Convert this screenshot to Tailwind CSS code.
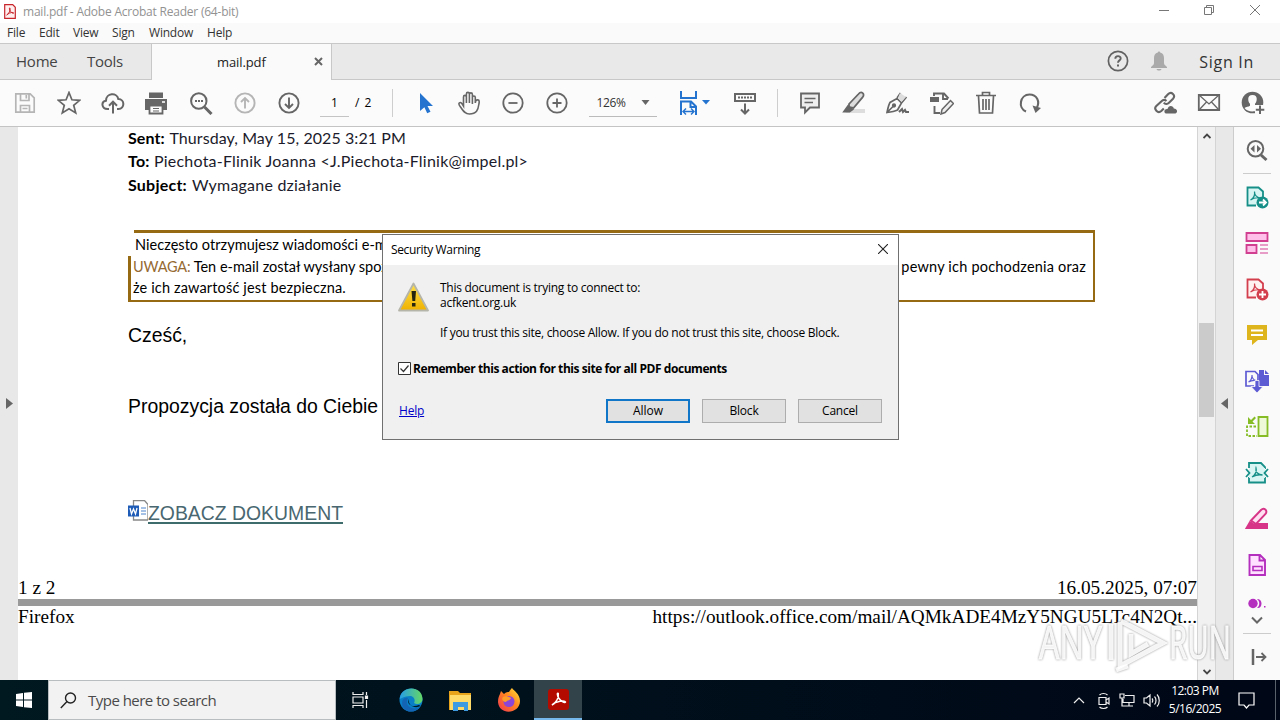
<!DOCTYPE html>
<html lang="en">
  <head>
    <meta charset="UTF-8" />
    <meta name="viewport" content="width=device-width, initial-scale=1.0" />
    <title>mail.pdf - Adobe Acrobat Reader (64-bit)</title>
    <script src="https://cdn.jsdelivr.net/npm/@tailwindcss/browser@4"></script>
  </head>

  <body
    class="relative flex h-screen w-screen flex-col overflow-hidden whitespace-nowrap bg-white font-['Open_Sans',sans-serif] text-black"
  >
    <!-- Title bar -->
    <header class="flex h-[23px] shrink-0 items-center bg-white">
      <svg class="mb-px ml-1 h-[15px] w-[12px]" viewBox="0 0 12 15" fill="none">
        <path d="M.7 .7h8l2.6 2.6v11H.7z" fill="#fff0ef" stroke="#c7252b" stroke-width="1.2" />
        <path d="M2.7 11C5 10 6.500 6 6 4.200 5.300 3 5 5 6.500 7.300 7.500 9 9.500 9.800 9.700 9 9.500 7.900 5 8.500 2.700 11z" stroke="#c7252b" />
      </svg>
      <span class="ml-[7px] text-[12px] tracking-[-0.22px] text-[#929292]">mail.pdf - Adobe Acrobat Reader (64-bit)</span>
      <svg class="ml-auto h-[23px] w-[124px]" viewBox="0 0 124 23" fill="none" stroke="#777">
        <path d="M3 10.500h10M48.500 7.500h7v7h-7zM50.500 7.500v-2h7v7h-2M94 5l10 10m0-10l-10 10" />
      </svg>
    </header>

    <!-- Menu bar -->
    <nav class="flex h-[20px] shrink-0 items-center bg-[#fafafa] pl-[7px] text-[12px] tracking-[-0.2px] text-[#333]">
      <span class="w-8">File</span>
      <span class="w-[34px]">Edit</span>
      <span class="w-[39px]">View</span>
      <span class="w-[37px]">Sign</span>
      <span class="w-[58px]">Window</span>
      <span>Help</span>
    </nav>

    <!-- Tabs -->
    <div class="flex h-[37px] shrink-0 border-y border-[#c8c8c8] bg-[#e9e9e9] text-[#444]">
      <div class="flex w-[152px] items-center border-r border-[#c8c8c8] pl-[16px] text-[15px]">
        <span class="w-[71px] tracking-[-0.2px]">Home</span>
        <span class="tracking-[-0.3px]">Tools</span>
      </div>
      <div class="-mb-px flex w-[180px] items-center border-r border-[#c8c8c8] bg-[#fafafa] text-[#222]">
        <span class="ml-[65px] w-[97px] pt-px text-[13px] tracking-[-0.1px]">mail.pdf</span>
        <svg class="mb-px h-[9px] w-[9px]" viewBox="0 0 9 9" stroke="#666" stroke-width="2"><path d="M1 1l7 7m0-7l-7 7" /></svg>
      </div>
      <div class="ml-auto flex items-center pr-[26px]">
        <svg class="mb-px h-[22px] w-[22px]" viewBox="0 0 22 22" fill="none" stroke="#626262">
          <circle cx="11" cy="11" r="9.600" stroke-width="1.700" />
          <path d="M8.300 8.800c0-3.500 5.400-3.500 5.400-.3 0 1.900-2.700 1.900-2.700 4.200" stroke-width="1.900" />
          <path d="M11 14.500v2" stroke-width="2" />
        </svg>
        <svg class="mb-px ml-5 h-[20px] w-[20px]" viewBox="0 0 20 20" fill="#aaa">
          <path d="M8.800 1.500c0-1.500 2.400-1.500 2.400 0C14 2.200 15 4.500 15 7v5c0 1.500 1 2.200 3 4v1H2v-1c2-1.800 3-2.500 3-4V7c0-2.500 1-4.800 3.800-5.500zM7.500 18h5c-.5 2-4.500 2-5 0z" />
        </svg>
        <span class="ml-[30px] text-[16px] tracking-[0.7px] text-[#333]">Sign In</span>
      </div>
    </div>

    <!-- Toolbar -->
    <div class="flex h-[47px] shrink-0 items-center border-b border-[#c4c4c4] bg-[#fbfbfb] pl-[13px]">
      <div class="flex items-center gap-5">
        <svg class="h-6 w-6" viewBox="0 0 24 24" fill="none" stroke="#b5b5b5" stroke-width="1.700">
          <path d="M2.800 2.800h14.400l4 4v14.400H2.800zM7.500 3v6.500h8.500V3M7.500 21v-6.500h9V21M13.300 4v3.500M9.500 17.500h5" />
        </svg>
        <svg class="h-6 w-6" viewBox="0 0 24 24" fill="none" stroke="#666" stroke-width="1.700">
          <path d="M12 1.500l2.900 7.300 7.800.5-6 5 2 7.600-6.700-4.200-6.700 4.200 2-7.600-6-5 7.800-.5z" />
        </svg>
        <svg class="h-6 w-6" viewBox="0 0 24 24" fill="none" stroke="#666" stroke-width="2">
          <path d="M8 18H6.500C.5 18-.3 10.500 5 9.700 5 2 16 1 17.300 8 24 8 24 18 17.500 18H16M12 22.500V11M8 14.700l4-4 4 4" />
        </svg>
        <svg class="-ml-px mr-px h-6 w-6" viewBox="0 0 24 24" fill="#666">
          <path d="M5 1.500h14V7H5zM1 8h22v11h-4v-4H5v4H1z" />
          <path d="M5.500 14.500h13v8h-13z" fill="#fbfbfb" stroke="#666" stroke-width="1.800" />
          <path d="M9 17.500h6M9 20h6" stroke="#666" /><path d="M18 10h3v2h-3z" fill="#ddd" />
        </svg>
        <svg class="h-6 w-6" viewBox="0 0 24 24" fill="none" stroke="#666" stroke-width="2">
          <circle cx="9.800" cy="10" r="7.700" /><path d="M15.500 16l7 7" stroke-width="3" /><path d="M6 10h2m1 0h2m1 0h2" />
        </svg>
        <svg class="h-6 w-6" viewBox="0 0 24 24" fill="none" stroke="#b5b5b5" stroke-width="1.900">
          <circle cx="12" cy="12" r="9.600" /><path d="M12 17.500V7M8 11l4-4 4 4" />
        </svg>
        <svg class="h-6 w-6" viewBox="0 0 24 24" fill="none" stroke="#666" stroke-width="1.900">
          <circle cx="12" cy="12" r="9.600" /><path d="M12 6.500V17M8 13l4 4 4-4" />
        </svg>
      </div>
      <div class="ml-[19px] flex h-[27px] w-[29px] items-center justify-center border-b border-[#c4c4c4] text-[12px]">1</div>
      <span class="ml-[6px] text-[12px] tracking-[1px]">/ 2</span>
      <div class="ml-5 h-7 w-px bg-[#cecece]"></div>
      <div class="ml-5 flex items-center gap-5">
        <svg class="h-6 w-6" viewBox="-1 0 24 24" fill="#2474cf"><path d="M6 2l13 13h-5.500l3 5.800-3.300 1.500-2.800-6L6 20z" /></svg>
        <svg class="h-6 w-6" viewBox="0 0 24 24" fill="none" stroke="#666" stroke-width="1.600">
          <path d="M6.500 15V6c0-2.200 2.900-2.200 2.900 0v6-9c0-2.200 3-2.200 3 0v9-8.500c0-2.200 3-2.200 3 0V13 6.500c0-2 2.900-2 2.900 0V12c.2-1.800 1-3.500 2.700-3.100 1.900.4 1.200 2.300.9 4.100-.8 6-2.300 10-9.500 10-4.500 0-6-3-8.500-6.500-1.500-2-3-3.500-1.500-4.700 1.500-1 2.700.8 4.100 3.200z" />
        </svg>
        <svg class="h-6 w-6" viewBox="0 0 24 24" fill="none" stroke="#666" stroke-width="1.800"><circle cx="12" cy="12" r="9.700" /><path d="M7.500 12h9" /></svg>
        <svg class="h-6 w-6" viewBox="0 0 24 24" fill="none" stroke="#666" stroke-width="1.800"><circle cx="12" cy="12" r="9.700" /><path d="M7.500 12h9M12 7.500v9" /></svg>
      </div>
      <div class="ml-5 flex h-[27px] w-[68px] items-center justify-between border-b border-[#bbb] pl-[7px] pr-[7px] text-[12px] text-[#333]">
        <span class="tracking-[-0.3px]">126%</span>
        <svg class="h-[5px] w-[9px]" viewBox="0 0 9 5" fill="#666"><path d="M.5 0h8l-4 5z" /></svg>
      </div>
      <svg class="ml-[21px] h-6 w-8" viewBox="0 0 32 24" fill="none" stroke="#2474cf" stroke-width="2">
        <path d="M3 0v7h15V0M3 24V10.500h10l5 5V24M12.500 11v5H18" /><path d="M5 20.500h11M8 17.500l-3 3 3 3m5-6l3 3-3 3" stroke-width="1.400" /><path d="M24 9h8l-4 4.500z" fill="#2474cf" stroke="none" />
      </svg>
      <svg class="ml-[23px] h-6 w-6" viewBox="0 0 24 24" fill="none" stroke="#666" stroke-width="2">
        <path d="M2 3h20v7H2zM12 12.500v10M8 18.500l4 4 4-4" /><path d="M5 6.500h14" stroke-dasharray="2 1" />
      </svg>
      <div class="ml-5 h-7 w-px bg-[#cecece]"></div>
      <div class="ml-5 flex items-center gap-5">
        <svg class="h-6 w-6" viewBox="0 0 24 24" fill="#eee" stroke="#666" stroke-width="1.800">
          <path d="M3 2.500h18v14h-9l-5 5v-5H3z" /><path d="M6.500 7.500h11M6.500 11.500h8.500" stroke-width="1.300" />
        </svg>
        <svg class="h-6 w-6" viewBox="0 0 24 24" fill="none" stroke="#666" stroke-width="1.800">
          <path d="M9 18h14v4H3z" fill="#ddd" stroke="none" /><path d="M7 13L16.500 3c3-3.500 7 0 4 3.300L11.500 17l-4.500-.8z" fill="#ddd" /><path d="M6 15l4.500 3.500-3 2H2z" fill="#666" />
        </svg>
        <svg class="h-6 w-6" viewBox="0 0 24 24" fill="none" stroke="#666" stroke-width="1.700">
          <path d="M1 21.500c1-4.500 1.500-7.500 3-10l7-4 4.500 4.500-4 7c-3 1.500-6 2-10.500 2.500zM1 21.500l6-6M11 7l3.500-5m6 4L15.500 12" /><path d="M14 2l6 4-4.500 5L12 7z" fill="#ddd" stroke="none" /><circle cx="8" cy="14.500" r="1.300" fill="#666" /><path d="M13 21l3-3 1 3 2-2 1 2h3" stroke-width="2" />
        </svg>
        <svg class="h-6 w-6" viewBox="0 0 24 24" fill="none" stroke="#666" stroke-width="1.900">
          <path d="M4 5V2.500h10l4.500 5M13 3v5h5M4.500 15v7h5.500" /><path d="M0 6h9v5H0z" fill="#666" stroke="none" /><path d="M12 18.500l8.500-9 3 3-8.500 9-4 1.500z" fill="#eee" stroke-width="1.500" />
        </svg>
        <svg class="h-6 w-6" viewBox="0 0 24 24" fill="none" stroke="#666" stroke-width="1.700">
          <path d="M2 4.500h20M8.500 4V1.500h7V4M4.500 5l1 17h13l1-17M9 8v11m3-11v11m3-11v11" />
        </svg>
        <svg class="h-6 w-6" viewBox="0 0 24 24" fill="none" stroke="#666" stroke-width="2.100">
          <path d="M8 20.500C-.5 17 2 3.500 11.500 3.500c7.500 0 10.500 7 7.500 13" /><path d="M14.500 14.500L23 17l-5.500 5z" fill="#666" stroke="none" />
        </svg>
      </div>
      <div class="ml-auto flex items-center gap-5 pr-[15px]">
        <svg class="h-6 w-6" viewBox="0 0 24 24" fill="none" stroke="#666" stroke-width="2.100">
          <path d="M11.500 7L15 3.300c3.500-3.500 8 1 5 4.500l-4 4c-1.800 1.800-4 1.300-5.200-.2" /><path d="M13.500 10c-1.500-1.300-3.500-1.300-5 .2L3.300 15c-3 3 1.500 8 5 5l2.500-2.500" />
          <path d="M13 22.500c-3-1-1.500-5 1.500-4.500 1-4.500 6-3.500 6.300-.5 3.700 0 4.200 4 1.700 5z" fill="#666" stroke="none" />
        </svg>
        <svg class="h-6 w-6" viewBox="0 0 24 24" fill="none" stroke="#666"><path d="M1.800 4h20.400v15H1.800z" stroke-width="1.800" /><path d="M2 4l10 9L22 4M2 19l7.500-8M22 19l-7.500-8" stroke-width="1.300" /></svg>
        <svg class="h-6 w-6" viewBox="0 0 24 24" fill="#666">
          <circle cx="11.500" cy="11.500" r="10.800" /><path d="M11.500 4c6 0 4.500 7 2.500 8.800v2c2 1.200 4 1.200 5.500 2.200-2 4-13 5-16 0 1.500-1 4-1.200 5.500-2.200v-2C7 11 5.500 4 11.500 4z" fill="#fbfbfb" />
          <path d="M14 14h10v10H14z" fill="#fbfbfb" /><path d="M19 14.500V23m-4.200-4.200h8.500" stroke="#666" stroke-width="2" />
        </svg>
      </div>
    </div>

    <!-- Document area -->
    <div class="flex h-[553px] shrink-0">
      <div class="flex w-[18px] items-center justify-center bg-[#e8e8e8]">
        <svg class="h-[11px] w-[7px]" viewBox="0 0 7 11" fill="#666"><path d="M0 0l7 5.500L0 11z" /></svg>
      </div>

      <main class="w-[1179px] overflow-hidden bg-white">
        <div class="h-[449px] pl-[110px]">
          <div class="-mt-px font-[Lato,sans-serif] text-[16px] leading-[23.4px] tracking-[0.22px] text-[#1b1b2b]">
            <p class="tracking-[0.08px]"><b class="mr-px text-black">Sent:</b> Thursday, May 15, 2025 3:21 PM</p>
            <p><b class="text-black">To:</b> Piechota-Flinik Joanna &lt;J.Piechota-Flinik@impel.pl&gt;</p>
            <p><b class="mr-px text-black">Subject:</b> Wymagane działanie</p>
          </div>
          <div class="mt-[34px] h-[72px] w-[967px] border-b-2 border-r-2 border-[#966a12] font-[Lato,sans-serif] text-[14.5px] leading-[21.500px]">
            <div class="ml-[6px] h-[3px] bg-[#966a12]"></div>
            <div class="pl-[7px] pt-px tracking-[0.04px]">Nieczęsto otrzymujesz wiadomości e-mail</div>
            <div class="flex h-[46px] border-l-[3px] border-[#966a12] pl-[2px]">
              <div>
                <p><span class="tracking-[-0.2px] text-[#966a32]">UWAGA:</span> Ten e-mail został wysłany spoza organizacji</p>
                <p class="tracking-[0.15px]">że ich zawartość jest bezpieczna.</p>
              </div>
              <p class="ml-auto mr-[7px] tracking-[0.2px]">pewny ich pochodzenia oraz</p>
            </div>
          </div>
          <div class="font-['Liberation_Sans',sans-serif] text-[19.4px] leading-[22px]">
            <p class="mt-[22px]">Cześć,</p>
            <p class="mt-[49px]">Propozycja została do Ciebie wysłana</p>
            <p class="mt-[83px] flex text-[#496770]">
              <svg class="h-[21px] w-5" viewBox="0 0 20 21" fill="none">
                <path d="M5.500 .5h11l3.500 4v15.500H5.500z" fill="#fff" stroke="#888" stroke-width="1.300" /><path d="M13 8h5m-5 3h5m-5 3h5" stroke="#4d82cc" />
                <path d="M0 5.500h11v11H0z" fill="#1e5cb8" /><path d="M2 8l1.500 6 2-5 2 5L9 8" stroke="#fff" stroke-width="1.300" />
              </svg>
              <a class="mt-[3px] h-[21px] border-b-2 border-[#3e6c6c] leading-[20px]">ZOBACZ DOKUMENT</a>
            </p>
          </div>
        </div>
        <div class="font-['Liberation_Serif',serif] text-[19.250px]">
          <div class="flex h-[24px] justify-between leading-[26px]"><span>1 z 2</span><span>16.05.2025, 07:07</span></div>
          <div class="h-[7px] bg-[#999]"></div>
          <div class="flex justify-between leading-[22px]"><span>Firefox</span><span>https://outlook.office.com/mail/AQMkADE4MzY5NGU5LTc4N2Qt...</span></div>
        </div>
      </main>

      <!-- Scrollbar -->
      <div class="flex w-[19px] flex-col items-center border-x border-[#d4d4d4] bg-[#f1f1f1]">
        <svg class="mt-[6px] h-[6px] w-2 shrink-0" viewBox="0 0 8 6" fill="none" stroke="#444" stroke-width="1.800"><path d="M.5 5L4 1.500 7.500 5" /></svg>
        <div class="mt-[184px] h-[94px] w-[15px] bg-[#cbcbcb]"></div>
        <svg class="mb-[5px] mt-auto h-[6px] w-2 shrink-0" viewBox="0 0 8 6" fill="none" stroke="#444" stroke-width="1.800"><path d="M.5 1L4 4.500 7.500 1" /></svg>
      </div>
      <div class="flex w-[18px] items-center justify-center border-r border-[#ccc] bg-[#e8e8e8]">
        <svg class="h-[11px] w-[7px]" viewBox="0 0 7 11" fill="#666"><path d="M7 0L0 5.500 7 11z" /></svg>
      </div>

      <!-- Tools pane -->
      <aside class="flex w-[46px] flex-col items-center bg-[#fafafa]">
        <svg class="mt-3 h-6 w-6 shrink-0" viewBox="0 0 24 24" fill="none" stroke="#666" stroke-width="2"><circle cx="10.500" cy="9.800" r="7.800" /><path d="M16 16l5.500 5" stroke-width="3" /><path d="M9.500 6v7.500L5.500 9.800zm2.500 0v7.500l4-3.700z" fill="#666" stroke="none" /></svg>
        <div class="mt-[10px] h-px w-7 shrink-0 bg-[#ccc]"></div>
        <div class="mt-[11px] flex flex-col gap-[22px]">
          <svg class="h-6 w-6" viewBox="0 0 24 24" fill="none" stroke="#168f88" stroke-width="1.800">
            <path d="M11 20.500H2.500v-18h11l4.500 4v6" fill="#d8f4f3" /><path d="M5.500 15c3-1.500 4.500-5 4-8.500 0 4 2 6 6 6.500-4-.7-7 0-10 2z" stroke-width="1.200" /><circle cx="17.500" cy="17.500" r="6" fill="#168f88" stroke="none" /><path d="M14 17.500h6.500m-2.500-3l3 3-3 3" stroke="#fff" />
          </svg>
          <svg class="h-6 w-6" viewBox="0 0 24 24" fill="#ffbfe8" stroke="#d13f91" stroke-width="1.800">
            <path d="M1.500 2h21v8h-21zM1.500 14h10v8h-10z" /><path d="M15 14h8m-8 4h8m-8 4h8" stroke-width="1.200" />
          </svg>
          <svg class="h-6 w-6" viewBox="0 0 24 24" fill="none" stroke="#d43f4e" stroke-width="1.800">
            <path d="M11 20.500H2.500v-18h11l4.500 4v6" fill="#fff1f0" /><path d="M5.500 15c3-1.500 4.500-5 4-8.500 0 4 2 6 6 6.500-4-.7-7 0-10 2z" stroke-width="1.200" /><circle cx="17.500" cy="17.500" r="6" fill="#d43f4e" stroke="none" /><path d="M14 17.500h7M17.500 14v7" stroke="#fff" />
          </svg>
          <svg class="h-6 w-6" viewBox="0 0 24 24" fill="#dfb51d"><path d="M2 2h20v15h-9l-6 5v-5H2z" /><path d="M6 7.500h12M6 12h12" stroke="#fff" stroke-width="1.800" /></svg>
          <svg class="h-6 w-6" viewBox="0 0 24 24" fill="none" stroke="#5d5bd3" stroke-width="1.700">
            <path d="M9 17H1V2.500h9l3 3V15" /><path d="M3.500 13c2-1 3.500-3.500 3.500-7 0 3 1.500 5 4 5.500-3-.5-5 0-7.500 1.500z" stroke-width="1.100" /><path d="M14 1h5v5h5v11H14z" fill="#5d5bd3" stroke="none" /><path d="M20 1l4 4h-4z" fill="#5d5bd3" stroke="none" /><path d="M6 17.500h4v-6h4v6h4L12 24z" fill="#5d5bd3" stroke="#fafafa" stroke-width=".8" />
          </svg>
          <svg class="h-6 w-6" viewBox="0 0 24 24" fill="none" stroke="#86bd27" stroke-width="1.800">
            <path d="M13.500 2h9v19h-9z" fill="#edf9d8" /><path d="M11 11.500H2V21h10" stroke-dasharray="2.500 1.500" /><path d="M3 2v7h7L7.500 6.500 11 3 9.500 1.500 6 5z" fill="#86bd27" stroke="none" />
          </svg>
          <svg class="h-6 w-6" viewBox="0 0 24 24" fill="none" stroke="#168f88" stroke-width="1.800">
            <path d="M4 7V2h12l4 4v2M4 16v5.500h16V16" fill="#d8f4f3" /><path d="M4 7h16v10H4z" fill="#d8f4f3" stroke="none" /><path d="M1 8l3.500 4L1 16M23 8l-3.500 4 3.500 4" /><path d="M7 16c3.500-2 5-6 4-9-1 4 2.500 7 6.500 7-4-.7-7 0-10.500 2z" stroke-width="1.300" />
          </svg>
          <svg class="h-6 w-6" viewBox="0 0 24 24" fill="none" stroke="#d73688" stroke-width="1.900">
            <path d="M10 16h13v6H7z" fill="#d73688" stroke="none" /><path d="M6 13.500L16 3c3-3 7 .5 4.500 4L11 17z" fill="#ffe0f2" /><path d="M5 15l5 3.500-2.500 2.500H1.500z" fill="#d73688" />
          </svg>
          <svg class="h-6 w-6" viewBox="0 0 24 24" fill="#ffe0ff" stroke="#b52fbe" stroke-width="1.900"><path d="M4.500 2H15l5 5v15h-15.500zM14.500 2v5.500H20" /><path d="M8 13.500h9v4H8z" stroke-width="1.600" /></svg>
        </div>
        <svg class="mt-[21px] h-[11px] w-6 shrink-0" viewBox="0 0 24 11" fill="#b52fbe"><circle cx="8" cy="5.500" r="4.700" /><path d="M12 1c6-1 6 10 0 9 3-2 3-7 0-9zM19 8h1.500v1.500H19z" /></svg>
        <svg class="mt-[7px] h-[8px] w-3 shrink-0" viewBox="0 0 12 8" fill="none" stroke="#666" stroke-width="2"><path d="M1 1.500l5 5 5-5" /></svg>
        <div class="mt-[9px] h-px w-7 shrink-0 bg-[#ccc]"></div>
        <svg class="ml-1 mt-[15px] h-[16px] w-[16px] shrink-0" viewBox="0 0 16 16" fill="none" stroke="#666" stroke-width="1.800"><path d="M2 0v16" stroke-width="2.500" /><path d="M5 8h9m-3.500-4l4 4-4 4" /></svg>
      </aside>
    </div>

    <!-- Taskbar -->
    <footer class="flex h-10 shrink-0 items-center bg-[#020b1a] bg-linear-to-r from-[#001820] to-[#000716] text-white">
      <div class="flex w-12 justify-center">
        <svg class="h-4 w-4" viewBox="0 0 16 16" fill="#fff"><path d="M0 2l7-1v6.500H0zM8 .8L16 0v7.500H8zM0 8.500h7V15l-7-1zM8 8.500h8V16l-8-.8z" /></svg>
      </div>
      <div class="flex h-10 w-72 items-center border border-[#b8bdbf] bg-[#f2f2f2] pl-[11px] text-[#4a4a4a]">
        <svg class="h-[17px] w-[17px]" viewBox="0 0 17 17" fill="none" stroke="#222" stroke-width="1.400"><circle cx="10.500" cy="6" r="5" /><path d="M7 9.500L.8 16" /></svg>
        <span class="ml-[11px] text-[15px] tracking-[-0.52px]">Type here to search</span>
      </div>
      <div class="flex w-12 justify-center">
        <svg class="h-[16px] w-[17px]" viewBox="0 0 17 16" fill="none" stroke="#eee" stroke-width="1.200"><path d="M1 0v2.500h10V0M1 5h10v6H1zM1 16v-2.500h10V16M14.500 0v3m0 5v8" /><path d="M13.500 4h2v2.500h-2z" fill="#fff" /></svg>
      </div>
      <div class="ml-[3px] flex gap-px">
        <div class="flex h-10 w-12 items-center justify-center">
          <svg class="h-6 w-6" viewBox="0 0 24 24">
            <defs><linearGradient id="edge" x1="0" x2="1"><stop stop-color="#279de5" /><stop offset="1" stop-color="#65d765" /></linearGradient></defs>
            <circle cx="12" cy="12" r="11.500" fill="#087fc7" /><path d="M.8 11C1-2 23-4 23.500 11c0 5-6 6-8.500 4 2-4-1-7-4-7-6 0-9 3-10.200 3z" fill="url(#edge)" /><path d="M9 10c-4 7 3 13 12 9-5 7-18 6-18-4C3 11 6 9 9 10z" fill="#1365b4" /><path d="M10 11c-3 5 3 9 10 6l1.500 1c-5 3-13 0-11.500-7z" fill="#001820" />
          </svg>
        </div>
        <div class="flex h-10 w-12 items-center justify-center">
          <svg class="h-[21px] w-[22px]" viewBox="0 0 22 21"><path d="M0 1h9l2 2h11v17H0z" fill="#e8a51c" /><path d="M1 5h21v15H1z" fill="#ffdc69" /><path d="M4 12h15v9h-4v-4H9v4H4z" fill="#3c9be1" /></svg>
        </div>
        <div class="flex h-10 w-12 items-center justify-center">
          <svg class="h-6 w-6" viewBox="0 0 24 24">
            <defs><linearGradient id="fox" x1="0" y1="1" x2="1" y2="0"><stop stop-color="#f13253" /><stop offset=".55" stop-color="#ff8620" /><stop offset="1" stop-color="#ffe83b" /></linearGradient></defs>
            <path d="M3 6l1-3 3 3c2-2 4-2 5-2 1-2 2-3 3-4 2 3 8 6 8 13 0 13-21 15-22 1C1 10 2 8 3 6z" fill="url(#fox)" /><circle cx="12" cy="13.500" r="5.500" fill="#8b45d9" /><path d="M6 9c3-2 6 0 8 1-1 3-4 2-5 4-3 0-5-3-3-5z" fill="#ff9d29" />
          </svg>
        </div>
        <div class="flex h-10 w-12 items-center justify-center border-b-2 border-[#76b9ed] bg-[#33434a]">
          <svg class="h-[21px] w-[21px]" viewBox="0 0 21 21" fill="none"><rect width="21" height="21" rx="3" fill="#b30b00" /><path d="M4 16c4-2 7-7 6.300-11.500-1.300-1.500-1.500 2 .7 5 2 3 6 5 6.500 3.500C17 11 8 12 4 16z" stroke="#fff" stroke-width="1.500" /></svg>
        </div>
      </div>
      <div class="ml-auto flex h-10 items-center">
        <svg class="h-[20px] w-[92px]" viewBox="0 0 92 20" fill="none" stroke="#eee" stroke-width="1.200">
          <path d="M2 13l5-5 5 5" /><path d="M27 7.500h7v7h-7zM34 10l3-2v6l-3-2M27.500 5c2-2 6-2 8 0m-8 12c2 2 6 2 8 0" />
          <path d="M53 5.500h9v7h-11V9m6 4v3m-5 0h9M48 4h4v4h-4zM50 8v8h3" /><path d="M72 8h2.500L78 5v11l-3.500-3H72zM80 8.500c1 1 1 3 0 4m2.500-6c2 2 2 6 0 8m2.500-10c3 3 3 9 0 12" />
        </svg>
        <div class="ml-px w-[60px] text-center text-[12px] leading-[18px] tracking-[-0.5px]"><p>12:03 PM</p><p>5/16/2025</p></div>
        <svg class="ml-[13px] mr-5 h-[17px] w-[17px]" viewBox="0 0 17 17" fill="none" stroke="#fff" stroke-width="1.200"><path d="M1 1h15v12h-5l-2.500 3L6 13H1z" /></svg>
        <div class="mr-1 h-10 w-px bg-[#59616b]"></div>
      </div>
    </footer>

    <!-- Recording watermark -->
    <svg class="absolute left-[1036px] top-[608px] h-[72px] w-[204px] drop-shadow-[0_0_1px_#888]" viewBox="0 0 204 72" fill="none" stroke="#fff" stroke-opacity=".9">
      <g fill="#fff" fill-opacity=".9" stroke-width="1" font-family="Open Sans" font-size="46" font-weight="400">
        <text x="3" y="51" textLength="63" lengthAdjust="spacingAndGlyphs">ANY</text>
        <text x="133" y="51" textLength="62" lengthAdjust="spacingAndGlyphs">RUN</text>
      </g>
      <path d="M75 16v36M84 14v44l43-23-42-22M95 26v20l17-10" stroke-width="5" /><path d="M80 62l12-4" stroke-width="5" />
    </svg>

    <!-- Security dialog -->
    <div class="absolute left-[382px] top-[234px] flex h-[206px] w-[517px] flex-col border border-[#707070] bg-[#f0f0f0] text-[12px]" role="dialog">
      <div class="flex h-[30px] items-center justify-between bg-white pl-2 pr-[10px]">
        <span class="tracking-[-0.35px]">Security Warning</span>
        <svg class="mb-[2px] h-[10px] w-[10px]" viewBox="0 0 10 10" stroke="#222" stroke-width="1.100"><path d="M0 0l10 10m0-10L0 10" /></svg>
      </div>
      <div class="flex pl-[15px] pt-[15px]">
        <svg class="mt-[2px] h-[30px] w-[31px]" viewBox="0 0 31 30">
          <defs><linearGradient id="warn" x2="0" y2="1"><stop stop-color="#ffe14a" /><stop offset="1" stop-color="#efb100" /></linearGradient></defs>
          <path d="M15.500 1.500L30 28.500H1z" fill="url(#warn)" stroke="#b5b5aa" stroke-width="1.800" stroke-linejoin="round" /><path d="M13.500 9h4.500l-.8 10h-2.800zM14 21h3.500v3.500H14z" fill="#252510" />
        </svg>
        <div class="ml-[11px] leading-[15px] tracking-[-0.26px]">
          <p>This document is trying to connect to:</p>
          <p>acfkent.org.uk</p>
          <p class="mt-[15px] tracking-[-0.28px]">If you trust this site, choose Allow. If you do not trust this site, choose Block.</p>
        </div>
      </div>
      <label class="mt-[21px] flex items-center pl-[15px] leading-[15px] tracking-[-0.44px]">
        <svg class="mr-[2px] h-[13px] w-[13px]" viewBox="0 0 13 13" fill="#fff" stroke="#333"><path d="M.5 .5h12v12H.5z" /><path d="M2.500 6.500l3 3 5-6" fill="none" stroke-width="1.200" /></svg>
        <b>Remember this action for this site for all PDF documents</b>
      </label>
      <div class="mt-[23px] flex items-center gap-3 pl-4 pr-4">
        <a class="mr-auto tracking-[-0.2px] text-[#0000c8] underline">Help</a>
        <button class="h-6 w-[84px] border-2 border-[#1077c8] bg-[#e1e1e1]">Allow</button>
        <button class="h-6 w-[84px] border border-[#adadad] bg-[#e1e1e1] tracking-[-0.2px]">Block</button>
        <button class="h-6 w-[84px] border border-[#adadad] bg-[#e1e1e1] tracking-[-0.2px]">Cancel</button>
      </div>
    </div>
  </body>
</html>
